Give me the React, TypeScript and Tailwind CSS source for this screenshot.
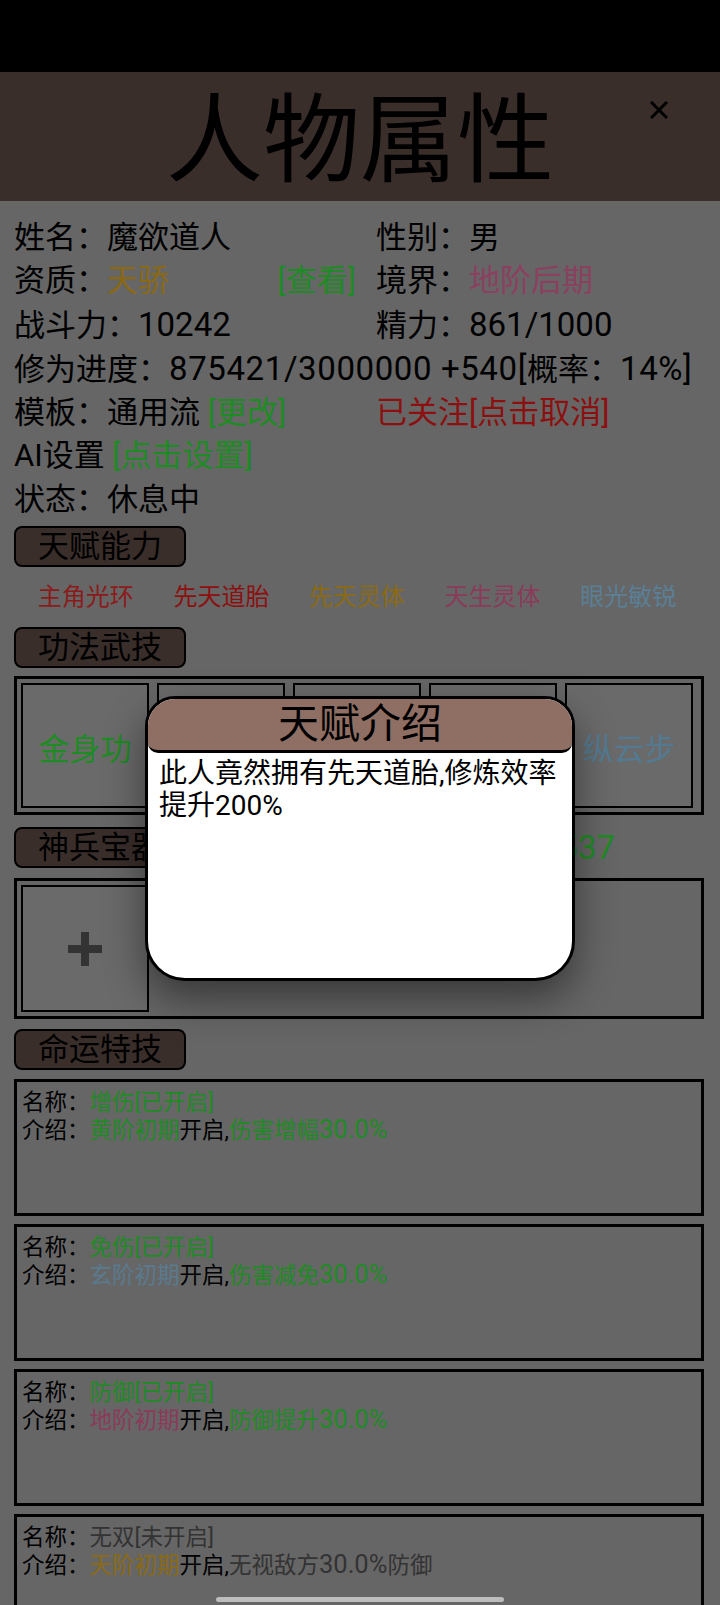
const GREEN = "text-[#1f8b24]"

// digits in the reference render a bit larger than the CJK text
function N({ children, wide }: { children: React.ReactNode; wide?: boolean }) {
  return <span className={wide ? "text-[33px] tracking-[0.6px]" : "text-[33px]"}>{children}</span>
}

function SectionTag({ label }: { label: string }) {
  return (
    <div className="ml-[14px] flex h-[41px] w-[172px] shrink-0 items-center justify-center rounded-[8px] border-2 border-black bg-[#3a2e2b] text-[31px] leading-none text-black">
      {label}
    </div>
  )
}

function FateBox({ children }: { children: React.ReactNode }) {
  return (
    <div className="h-[137px] border-[3px] border-black px-[5px] pt-[7px] text-[22.5px] leading-[27px] text-black">
      {children}
    </div>
  )
}

function Pct({ children }: { children: React.ReactNode }) {
  return <span className="text-[25.5px]">{children}</span>
}

export default function App() {
  const talents = [
    { name: "主角光环", color: "text-[#8b1a1a]" },
    { name: "先天道胎", color: "text-[#8c1010]" },
    { name: "先天灵体", color: "text-[#8b6a14]" },
    { name: "天生灵体", color: "text-[#8b3a5a]" },
    { name: "眼光敏锐", color: "text-[#5a7f96]" },
  ]

  return (
    <div className="relative h-[1605px] w-[720px] overflow-hidden bg-[#666666] font-[Roboto,'Noto_Sans_CJK_SC',sans-serif] text-black">
      {/* status bar */}
      <div className="h-[72px] bg-black" />

      {/* title bar */}
      <div className="relative flex h-[129px] items-center justify-center bg-[#3a2e2b] pt-[10px]">
        <span className="text-[97px] leading-none">人物属性</span>
        <svg className="absolute right-[52px] top-[29px]" width="18" height="18" viewBox="0 0 18 18">
          <path d="M1 1L17 17M17 1L1 17" stroke="#000" strokeWidth="3" />
        </svg>
      </div>

      {/* info */}
      <div className="px-[14px] pt-[15px] text-[31px] leading-[43.3px]">
        <div className="grid grid-cols-[362px_1fr]">
          <div>姓名：魔欲道人</div>
          <div>性别：男</div>
        </div>
        <div className="grid grid-cols-[362px_1fr]">
          <div className="flex justify-between pr-[20px]">
            <span>
              资质：<span className="text-[#8b6914]">天骄</span>
            </span>
            <span className={GREEN}>[查看]</span>
          </div>
          <div>
            境界：<span className="text-[#8b4060]">地阶后期</span>
          </div>
        </div>
        <div className="grid grid-cols-[362px_1fr]">
          <div>
            战斗力：<N>10242</N>
          </div>
          <div>
            精力：<N>861/1000</N>
          </div>
        </div>
        <div className="whitespace-nowrap">
          修为进度：<N wide>875421/3000000 +540[</N>概率：<N wide>14%]</N>
        </div>
        <div className="grid grid-cols-[362px_1fr]">
          <div>
            模板：通用流 <span className={GREEN}>[更改]</span>
          </div>
          <div className="text-[#8c1010]">已关注[点击取消]</div>
        </div>
        <div>
          AI设置 <span className={GREEN}>[点击设置]</span>
        </div>
        <div>状态：休息中</div>
      </div>

      {/* talents */}
      <div className="mt-[5px]">
        <SectionTag label="天赋能力" />
      </div>
      <div className="grid h-[60px] grid-cols-5 items-center pl-[18px] pr-[24px] text-[24px]">
        {talents.map((t) => (
          <div key={t.name} className={`text-center ${t.color}`}>
            {t.name}
          </div>
        ))}
      </div>

      {/* skills */}
      <SectionTag label="功法武技" />
      <div className="ml-[14px] mt-[8px] w-[690px] border-[3px] border-black py-[4px] pl-[4px]">
        <div className="grid grid-cols-[repeat(5,128px)] gap-[8px]">
          <div className="flex h-[125px] items-center justify-center border-2 border-black bg-[#6a6a6a] pt-[10px] text-[31px] text-[#1f8b24]">
            金身功
          </div>
          <div className="h-[125px] border-2 border-black bg-[#6a6a6a]" />
          <div className="h-[125px] border-2 border-black bg-[#6a6a6a]" />
          <div className="h-[125px] border-2 border-black bg-[#6a6a6a]" />
          <div className="flex h-[125px] items-center justify-center border-2 border-black bg-[#6a6a6a] pt-[10px] text-[31px] text-[#537a92]">
            纵云步
          </div>
        </div>
      </div>

      {/* weapons */}
      <div className="mt-[12px] flex h-[41px] items-center">
        <SectionTag label="神兵宝器" />
        <span className="ml-auto mr-[105px] text-[31px] leading-none text-[#1f8b24]">
          战力：<N>537</N>
        </span>
      </div>
      <div className="ml-[14px] mt-[10px] w-[690px] border-[3px] border-black p-[4px]">
        <div className="flex h-[127px] w-[128px] items-center justify-center border-2 border-black bg-[#6a6a6a]">
          <svg width="34" height="34" viewBox="0 0 34 34">
            <rect x="13" y="0" width="8" height="34" fill="#333" />
            <rect x="0" y="13" width="34" height="8" fill="#333" />
          </svg>
        </div>
      </div>

      {/* fate skills */}
      <div className="mt-[10px]">
        <SectionTag label="命运特技" />
      </div>
      <div className="ml-[14px] mt-[9px] flex w-[690px] flex-col gap-[8px]">
        <FateBox>
          <div>
            名称：<span className={GREEN}>增伤[已开启]</span>
          </div>
          <div>
            介绍：<span className={GREEN}>黄阶初期</span>开启,
            <span className={GREEN}>
              伤害增幅<Pct>30.0%</Pct>
            </span>
          </div>
        </FateBox>
        <FateBox>
          <div>
            名称：<span className={GREEN}>免伤[已开启]</span>
          </div>
          <div>
            介绍：<span className="text-[#5a7a8e]">玄阶初期</span>开启,
            <span className={GREEN}>
              伤害减免<Pct>30.0%</Pct>
            </span>
          </div>
        </FateBox>
        <FateBox>
          <div>
            名称：<span className={GREEN}>防御[已开启]</span>
          </div>
          <div>
            介绍：<span className="text-[#8b3a5a]">地阶初期</span>开启,
            <span className={GREEN}>
              防御提升<Pct>30.0%</Pct>
            </span>
          </div>
        </FateBox>
        <FateBox>
          <div>
            名称：<span className="text-[#333]">无双[未开启]</span>
          </div>
          <div>
            介绍：<span className="text-[#8b6a14]">天阶初期</span>开启,
            <span className="text-[#333]">
              无视敌方<Pct>30.0%</Pct>防御
            </span>
          </div>
        </FateBox>
      </div>

      {/* talent dialog */}
      <div className="absolute left-[145px] top-[696px] h-[285px] w-[430px] overflow-hidden rounded-t-[30px] rounded-b-[40px] border-[3px] border-black bg-white shadow-[0_18px_40px_rgba(0,0,0,0.45)]">
        <div className="flex h-[54px] items-center justify-center rounded-b-[10px] border-b-[3px] border-black bg-[#8f6f64] text-[41px] leading-none">
          天赋介绍
        </div>
        <p className="px-[11px] pt-[5px] text-[28px] leading-[32px]">此人竟然拥有先天道胎,修炼效率提升200%</p>
      </div>

      {/* home indicator */}
      <div className="absolute bottom-[3px] left-[216px] h-[5px] w-[288px] rounded-full bg-[#bdbdbd]" />
    </div>
  )
}
